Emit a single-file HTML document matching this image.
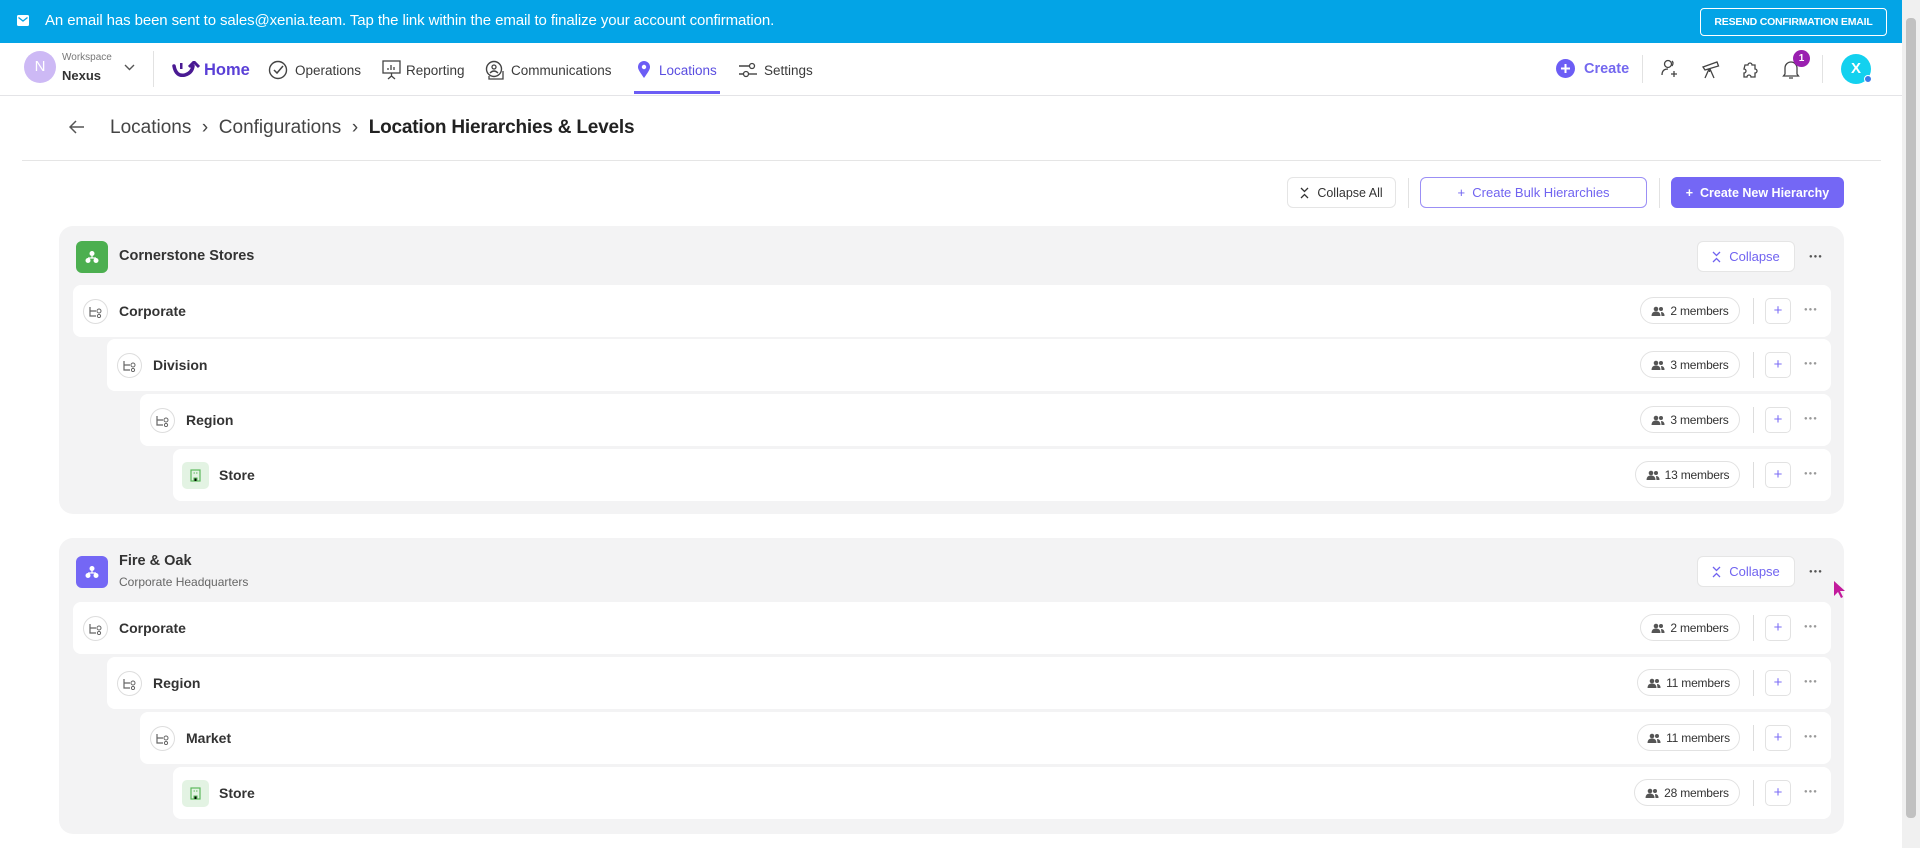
<!DOCTYPE html>
<html><head><meta charset="utf-8">
<style>
*{box-sizing:border-box;margin:0;padding:0}
body{width:1920px;height:848px;overflow:hidden;background:#fff;font-family:"Liberation Sans",sans-serif;color:#222;position:relative}
.a{position:absolute}
.banner{left:0;top:0;width:1902px;height:43px;background:#03a4e6;color:#fff}
.nav{left:0;top:43px;width:1902px;height:53px;border-bottom:1px solid #e4e4e7;background:#fff}
.ni{font-size:13.5px;color:#3a3a3a;top:63px}
.card{background:#f3f3f4;border-radius:14px;left:59px;width:1785px}
.row{background:#fff;border-radius:8px;height:52px}
.ric{width:25px;height:25px;border:1px solid #ddd;border-radius:50%;background:#fff;display:flex;align-items:center;justify-content:center;top:14px;left:10px}
.lbl{font-size:14px;font-weight:bold;color:#333;top:18px;left:46px}
.pill{height:27px;border:1px solid #e2e2e2;border-radius:14px;display:flex;align-items:center;justify-content:center;gap:5px;white-space:nowrap;background:#fff}
.pill span{color:#333;font-size:12px;letter-spacing:-0.2px}
.vd{width:1px;height:26px;background:#ddd}
.pb{width:26px;height:26px;border:1px solid #e2e2e2;border-radius:5px;color:#7b6cf6;font-size:15px;text-align:center;line-height:23px;background:#fff}
.dots{font-size:6px;color:#999;letter-spacing:1px}
.hi{width:32px;height:32px;border-radius:6px;display:flex;align-items:center;justify-content:center}
.cbtn{height:31px;background:#fff;border:1px solid #e5e5e5;border-radius:6px;color:#7063f0;font-size:13px;display:flex;align-items:center;justify-content:center;gap:8px;white-space:nowrap}
</style></head><body>

<div class="a banner">
 <svg class="a" style="left:17px;top:15px" width="12" height="11" viewBox="0 0 12 11"><rect x="0" y="0" width="12" height="11" rx="1.5" fill="#fff"/><path d="M1.5 2.5 L6 6 L10.5 2.5" stroke="#03a4e6" stroke-width="1.3" fill="none"/></svg>
 <div class="a" style="left:45px;top:12px;font-size:15px;letter-spacing:-0.1px">An email has been sent to sales@xenia.team. Tap the link within the email to finalize your account confirmation.</div>
 <div class="a" style="left:1700px;top:8px;width:187px;height:28px;border:1px solid #fff;border-radius:4px;font-size:10.5px;text-align:center;line-height:26px;font-weight:bold;letter-spacing:-0.2px">RESEND CONFIRMATION EMAIL</div>
</div>
<div class="a" style="left:1902px;top:0;width:18px;height:848px;background:#f0f0f0"></div>
<div class="a" style="left:1906px;top:18px;width:10px;height:800px;background:#c1c1c1;border-radius:4px"></div>

<div class="a nav"></div>
<div class="a" style="left:24px;top:51px;width:32px;height:32px;border-radius:50%;background:#cdb9f5;color:#fff;font-size:15px;text-align:center;line-height:32px">N</div>
<div class="a" style="left:62px;top:52px;font-size:10px;color:#777">Workspace</div>
<div class="a" style="left:62px;top:68px;font-size:13px;font-weight:bold;color:#333">Nexus</div>
<svg class="a" style="left:124px;top:64px" width="11" height="7"><path d="M1 1l4.5 4.5L10 1" stroke="#555" stroke-width="1.4" fill="none"/></svg>
<div class="a" style="left:153px;top:51px;width:1px;height:36px;background:#e2e2e2"></div>
<svg class="a" style="left:171px;top:61px" width="30" height="18" viewBox="0 0 30 18"><path d="M3 5 Q5 16 14 14 Q21 12 22 5" stroke="#4a1a93" stroke-width="3.5" fill="none" stroke-linecap="round"/><path d="M18 6 L23 1 L28 6" stroke="#4a1a93" stroke-width="3" fill="none"/><rect x="9" y="2" width="2.5" height="6" fill="#4a1a93"/></svg>
<div class="a" style="left:204px;top:61px;font-size:16.5px;color:#5a3fd6;font-weight:bold">Home</div>
<svg class="a" style="left:268px;top:60px" width="20" height="20" viewBox="0 0 20 20"><circle cx="10" cy="10" r="8.5" stroke="#444" stroke-width="1.4" fill="none"/><path d="M6 10l3 3 6-7" stroke="#444" stroke-width="1.5" fill="none"/></svg>
<div class="a ni" style="left:295px">Operations</div>
<svg class="a" style="left:382px;top:60px" width="19" height="20" viewBox="0 0 19 20"><rect x="1" y="1" width="17" height="12" stroke="#444" stroke-width="1.3" fill="none"/><path d="M6 10V8M9 10V5M12 10V7M9.5 13v3M6 19l3.5-3 3.5 3" stroke="#444" stroke-width="1.3" fill="none"/></svg>
<div class="a ni" style="left:406px">Reporting</div>
<svg class="a" style="left:485px;top:60px" width="20" height="20" viewBox="0 0 20 20"><circle cx="9" cy="9" r="7.5" stroke="#444" stroke-width="1.4" fill="none"/><circle cx="9" cy="7" r="2" stroke="#444" stroke-width="1.3" fill="none"/><path d="M5 13q4-4 8 0M4 16v3h14V11" stroke="#444" stroke-width="1.3" fill="none"/></svg>
<div class="a ni" style="left:511px">Communications</div>
<svg class="a" style="left:637px;top:60px" width="14" height="19" viewBox="0 0 14 19"><path d="M7 18C2 11 1 9 1 7a6 6 0 0112 0c0 2-1 4-6 11z" fill="#6c5df5"/><circle cx="7" cy="7" r="2.2" fill="#fff"/></svg>
<div class="a ni" style="left:659px;color:#5a4de0">Locations</div>
<div class="a" style="left:634px;top:91px;width:86px;height:3px;background:#6c5df5"></div>
<svg class="a" style="left:738px;top:62px" width="20" height="16" viewBox="0 0 20 16"><path d="M1 4h10M1 12h4" stroke="#444" stroke-width="1.4"/><circle cx="14" cy="4" r="2.5" stroke="#444" stroke-width="1.3" fill="none"/><circle cx="8" cy="12" r="2.5" stroke="#444" stroke-width="1.3" fill="none"/><path d="M11 12h8" stroke="#444" stroke-width="1.4"/></svg>
<div class="a ni" style="left:764px">Settings</div>

<svg class="a" style="left:1556px;top:59px" width="19" height="19"><circle cx="9.5" cy="9.5" r="9.5" fill="#6c5df5"/><path d="M9.5 5v9M5 9.5h9" stroke="#fff" stroke-width="2"/></svg>
<div class="a" style="left:1584px;top:61px;font-size:14.5px;font-weight:bold;color:#7468ef">Create</div>
<div class="a" style="left:1642px;top:55px;width:1px;height:28px;background:#e2e2e2"></div>
<svg class="a" style="left:1660px;top:59px" width="20" height="20" viewBox="0 0 20 20"><circle cx="8" cy="5" r="3.5" stroke="#444" stroke-width="1.3" fill="none"/><path d="M2 16q0-6 6-6M14 12v6M11 15h6M12 2q2 2 0 5" stroke="#444" stroke-width="1.3" fill="none"/></svg>
<svg class="a" style="left:1701px;top:59px" width="20" height="20" viewBox="0 0 20 20"><path d="M2 8l14-5 1.5 4L4 11z M8 10l-4 9M9 10l4 9M8.5 10v3" stroke="#444" stroke-width="1.3" fill="none"/></svg>
<svg class="a" style="left:1741px;top:59px" width="20" height="20" viewBox="0 0 20 20"><path d="M4 6h3a2 2 0 114 0h3v4a2 2 0 110 4v4h-4a2 2 0 10-4 0H3v-4a2 2 0 100-4z" stroke="#444" stroke-width="1.3" fill="none"/></svg>
<svg class="a" style="left:1781px;top:59px" width="20" height="21" viewBox="0 0 20 21"><path d="M4 15V9a6 6 0 0112 0v6l1.5 2h-15zM8 19h4" stroke="#444" stroke-width="1.3" fill="none"/></svg>
<div class="a" style="left:1793px;top:50px;width:17px;height:17px;border-radius:50%;background:#9a1fb0;color:#fff;font-size:10px;text-align:center;line-height:17px;font-weight:bold">1</div>
<div class="a" style="left:1822px;top:55px;width:1px;height:28px;background:#e2e2e2"></div>
<div class="a" style="left:1841px;top:54px;width:30px;height:30px;border-radius:50%;background:#13d1ef;color:#fff;font-size:15px;font-weight:bold;text-align:center;line-height:30px">X</div>
<div class="a" style="left:1864px;top:75px;width:8px;height:8px;border-radius:50%;background:#3a7be8;border:1px solid #fff"></div>

<svg class="a" style="left:69px;top:120px" width="16" height="14"><path d="M15 7H2M7 1L1 7l6 6" stroke="#555" stroke-width="1.5" fill="none"/></svg>
<div class="a" style="left:110px;top:117px;font-size:19px;color:#444">Locations &nbsp;›&nbsp; Configurations &nbsp;›&nbsp; <b style="color:#222;letter-spacing:-0.2px">Location Hierarchies &amp; Levels</b></div>
<div class="a" style="left:22px;top:160px;width:1859px;height:1px;background:#e5e5e5"></div>

<div class="a cbtn" style="left:1287px;top:177px;width:109px;color:#333;font-size:12.5px"><svg width="9" height="12"><path d="M1 1l3.5 3.5L8 1M1 11l3.5-3.5L8 11" stroke="#333" stroke-width="1.3" fill="none"/></svg>Collapse All</div>
<div class="a" style="left:1408px;top:178px;width:1px;height:30px;background:#e2e2e2"></div>
<div class="a cbtn" style="left:1420px;top:177px;width:227px;border:1.5px solid #9b8ff5">+ &nbsp;Create Bulk Hierarchies</div>
<div class="a" style="left:1659px;top:178px;width:1px;height:30px;background:#e2e2e2"></div>
<div class="a cbtn" style="left:1671px;top:177px;width:173px;background:#7467f5;border-color:#7467f5;color:#fff;font-weight:bold;font-size:12.5px">+ &nbsp;Create New Hierarchy</div>

<!-- Card 1 -->
<div class="a card" style="top:226px;height:288px"></div>
<div class="a hi" style="left:76px;top:241px;background:#4caf50"><svg width="14" height="14" viewBox="0 0 14 14"><circle cx="7" cy="3.5" r="2.5" fill="#fff"/><circle cx="3" cy="10.5" r="2.5" fill="#fff"/><circle cx="11" cy="10.5" r="2.5" fill="#fff"/><path d="M7 5v3M3 8h8" stroke="#fff" stroke-width="1.2"/></svg></div>
<div class="a" style="left:119px;top:248px;font-size:14.5px;font-weight:bold;color:#333">Cornerstone Stores</div>
<div class="a cbtn" style="left:1697px;top:241px;width:98px"><svg width="9" height="12"><path d="M1 1l3.5 3.5L8 1M1 11l3.5-3.5L8 11" stroke="#7063f0" stroke-width="1.3" fill="none"/></svg>Collapse</div>
<div class="a dots" style="left:1809px;top:254px;color:#555">●●●</div>

<!-- Card 2 -->
<div class="a card" style="top:538px;height:296px"></div>
<div class="a hi" style="left:76px;top:556px;background:#7467f5"><svg width="14" height="14" viewBox="0 0 14 14"><circle cx="7" cy="3.5" r="2.5" fill="#fff"/><circle cx="3" cy="10.5" r="2.5" fill="#fff"/><circle cx="11" cy="10.5" r="2.5" fill="#fff"/><path d="M7 5v3M3 8h8" stroke="#fff" stroke-width="1.2"/></svg></div>
<div class="a" style="left:119px;top:553px;font-size:14.5px;font-weight:bold;color:#333">Fire &amp; Oak</div>
<div class="a" style="left:119px;top:575px;font-size:12px;color:#666">Corporate Headquarters</div>
<div class="a cbtn" style="left:1697px;top:556px;width:98px"><svg width="9" height="12"><path d="M1 1l3.5 3.5L8 1M1 11l3.5-3.5L8 11" stroke="#7063f0" stroke-width="1.3" fill="none"/></svg>Collapse</div>
<div class="a dots" style="left:1809px;top:569px;color:#555">●●●</div>
<svg class="a" style="left:1833px;top:580px" width="14" height="20"><path d="M1 1v15l4-4 3 6 2-1-3-6h5z" fill="#c21a9c"/></svg>

<!-- Cornerstone rows -->
<div class="a row" style="left:73px;top:285px;width:1758px"><div class="a ric"><svg width="13" height="12" viewBox="0 0 13 12"><path d="M1 1v9h6M1 5h6" stroke="#666" stroke-width="1.2" fill="none"/><circle cx="10" cy="5" r="2" stroke="#666" fill="none"/><circle cx="10" cy="10" r="1.6" stroke="#666" fill="none"/></svg></div><div class="a lbl">Corporate</div></div>
<div class="a row" style="left:107px;top:339px;width:1724px"><div class="a ric"><svg width="13" height="12" viewBox="0 0 13 12"><path d="M1 1v9h6M1 5h6" stroke="#666" stroke-width="1.2" fill="none"/><circle cx="10" cy="5" r="2" stroke="#666" fill="none"/><circle cx="10" cy="10" r="1.6" stroke="#666" fill="none"/></svg></div><div class="a lbl">Division</div></div>
<div class="a row" style="left:140px;top:394px;width:1691px"><div class="a ric"><svg width="13" height="12" viewBox="0 0 13 12"><path d="M1 1v9h6M1 5h6" stroke="#666" stroke-width="1.2" fill="none"/><circle cx="10" cy="5" r="2" stroke="#666" fill="none"/><circle cx="10" cy="10" r="1.6" stroke="#666" fill="none"/></svg></div><div class="a lbl">Region</div></div>
<div class="a row" style="left:173px;top:449px;width:1658px"><div class="a" style="left:9px;top:13px;width:27px;height:27px;border-radius:5px;background:#e3f3e3;display:flex;align-items:center;justify-content:center"><svg width="11" height="13"><rect x="1" y="1" width="9" height="11" stroke="#5cb85c" stroke-width="1.2" fill="none"/><path d="M4 12V9h3v3M3.5 4h1.5M6 4h1.5" stroke="#5cb85c" stroke-width="1.1"/></svg></div><div class="a lbl">Store</div></div>

<!-- Fire & Oak rows -->
<div class="a row" style="left:73px;top:602px;width:1758px"><div class="a ric"><svg width="13" height="12" viewBox="0 0 13 12"><path d="M1 1v9h6M1 5h6" stroke="#666" stroke-width="1.2" fill="none"/><circle cx="10" cy="5" r="2" stroke="#666" fill="none"/><circle cx="10" cy="10" r="1.6" stroke="#666" fill="none"/></svg></div><div class="a lbl">Corporate</div></div>
<div class="a row" style="left:107px;top:657px;width:1724px"><div class="a ric"><svg width="13" height="12" viewBox="0 0 13 12"><path d="M1 1v9h6M1 5h6" stroke="#666" stroke-width="1.2" fill="none"/><circle cx="10" cy="5" r="2" stroke="#666" fill="none"/><circle cx="10" cy="10" r="1.6" stroke="#666" fill="none"/></svg></div><div class="a lbl">Region</div></div>
<div class="a row" style="left:140px;top:712px;width:1691px"><div class="a ric"><svg width="13" height="12" viewBox="0 0 13 12"><path d="M1 1v9h6M1 5h6" stroke="#666" stroke-width="1.2" fill="none"/><circle cx="10" cy="5" r="2" stroke="#666" fill="none"/><circle cx="10" cy="10" r="1.6" stroke="#666" fill="none"/></svg></div><div class="a lbl">Market</div></div>
<div class="a row" style="left:173px;top:767px;width:1658px"><div class="a" style="left:9px;top:13px;width:27px;height:27px;border-radius:5px;background:#e3f3e3;display:flex;align-items:center;justify-content:center"><svg width="11" height="13"><rect x="1" y="1" width="9" height="11" stroke="#5cb85c" stroke-width="1.2" fill="none"/><path d="M4 12V9h3v3M3.5 4h1.5M6 4h1.5" stroke="#5cb85c" stroke-width="1.1"/></svg></div><div class="a lbl">Store</div></div>

<!-- right controls -->
<div class="a pill" style="left:1640px;top:297px;width:100px"><svg width="14" height="10"><circle cx="5" cy="3" r="2.3" fill="#555"/><path d="M0.5 10q0-4.5 4.5-4.5T9.5 10z" fill="#555"/><circle cx="10" cy="3" r="2" fill="#555"/><path d="M10 6q3.5 0 3.5 4h-3" fill="#555"/></svg><span>2 members</span></div>
<div class="a pill" style="left:1640px;top:351px;width:100px"><svg width="14" height="10"><circle cx="5" cy="3" r="2.3" fill="#555"/><path d="M0.5 10q0-4.5 4.5-4.5T9.5 10z" fill="#555"/><circle cx="10" cy="3" r="2" fill="#555"/><path d="M10 6q3.5 0 3.5 4h-3" fill="#555"/></svg><span>3 members</span></div>
<div class="a pill" style="left:1640px;top:406px;width:100px"><svg width="14" height="10"><circle cx="5" cy="3" r="2.3" fill="#555"/><path d="M0.5 10q0-4.5 4.5-4.5T9.5 10z" fill="#555"/><circle cx="10" cy="3" r="2" fill="#555"/><path d="M10 6q3.5 0 3.5 4h-3" fill="#555"/></svg><span>3 members</span></div>
<div class="a pill" style="left:1635px;top:461px;width:105px"><svg width="14" height="10"><circle cx="5" cy="3" r="2.3" fill="#555"/><path d="M0.5 10q0-4.5 4.5-4.5T9.5 10z" fill="#555"/><circle cx="10" cy="3" r="2" fill="#555"/><path d="M10 6q3.5 0 3.5 4h-3" fill="#555"/></svg><span>13 members</span></div>
<div class="a pill" style="left:1640px;top:614px;width:100px"><svg width="14" height="10"><circle cx="5" cy="3" r="2.3" fill="#555"/><path d="M0.5 10q0-4.5 4.5-4.5T9.5 10z" fill="#555"/><circle cx="10" cy="3" r="2" fill="#555"/><path d="M10 6q3.5 0 3.5 4h-3" fill="#555"/></svg><span>2 members</span></div>
<div class="a pill" style="left:1637px;top:669px;width:103px"><svg width="14" height="10"><circle cx="5" cy="3" r="2.3" fill="#555"/><path d="M0.5 10q0-4.5 4.5-4.5T9.5 10z" fill="#555"/><circle cx="10" cy="3" r="2" fill="#555"/><path d="M10 6q3.5 0 3.5 4h-3" fill="#555"/></svg><span>11 members</span></div>
<div class="a pill" style="left:1637px;top:724px;width:103px"><svg width="14" height="10"><circle cx="5" cy="3" r="2.3" fill="#555"/><path d="M0.5 10q0-4.5 4.5-4.5T9.5 10z" fill="#555"/><circle cx="10" cy="3" r="2" fill="#555"/><path d="M10 6q3.5 0 3.5 4h-3" fill="#555"/></svg><span>11 members</span></div>
<div class="a pill" style="left:1634px;top:779px;width:106px"><svg width="14" height="10"><circle cx="5" cy="3" r="2.3" fill="#555"/><path d="M0.5 10q0-4.5 4.5-4.5T9.5 10z" fill="#555"/><circle cx="10" cy="3" r="2" fill="#555"/><path d="M10 6q3.5 0 3.5 4h-3" fill="#555"/></svg><span>28 members</span></div>

<div class="a vd" style="left:1753px;top:298px"></div><div class="a pb" style="left:1765px;top:298px">+</div><div class="a dots" style="left:1804px;top:307px">●●●</div>
<div class="a vd" style="left:1753px;top:352px"></div><div class="a pb" style="left:1765px;top:352px">+</div><div class="a dots" style="left:1804px;top:361px">●●●</div>
<div class="a vd" style="left:1753px;top:407px"></div><div class="a pb" style="left:1765px;top:407px">+</div><div class="a dots" style="left:1804px;top:416px">●●●</div>
<div class="a vd" style="left:1753px;top:462px"></div><div class="a pb" style="left:1765px;top:462px">+</div><div class="a dots" style="left:1804px;top:471px">●●●</div>
<div class="a vd" style="left:1753px;top:615px"></div><div class="a pb" style="left:1765px;top:615px">+</div><div class="a dots" style="left:1804px;top:624px">●●●</div>
<div class="a vd" style="left:1753px;top:670px"></div><div class="a pb" style="left:1765px;top:670px">+</div><div class="a dots" style="left:1804px;top:679px">●●●</div>
<div class="a vd" style="left:1753px;top:725px"></div><div class="a pb" style="left:1765px;top:725px">+</div><div class="a dots" style="left:1804px;top:734px">●●●</div>
<div class="a vd" style="left:1753px;top:780px"></div><div class="a pb" style="left:1765px;top:780px">+</div><div class="a dots" style="left:1804px;top:789px">●●●</div>
</body></html>
